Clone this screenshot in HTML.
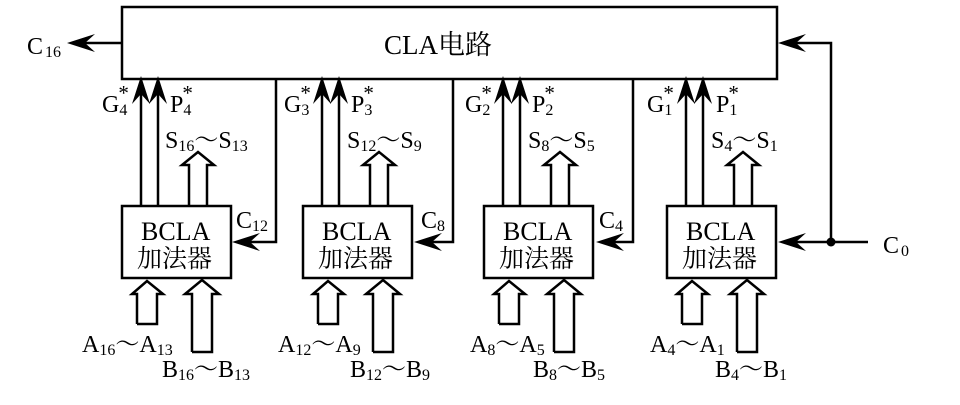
<!DOCTYPE html>
<html><head><meta charset="utf-8"><style>
html,body{margin:0;padding:0;background:#fff;}
svg{display:block;}
text{font-family:"Liberation Serif","Noto Serif CJK SC",serif;fill:#000;}
</style></head><body>
<svg width="960" height="405" viewBox="0 0 960 405" xmlns="http://www.w3.org/2000/svg">
<defs>
<polygon id="au" points="0,0 9,28 0,18 -9,28" fill="#000"/>
<polygon id="al" points="0,0 28,-9 18,0 28,9" fill="#000"/>
<g id="blk" fill="none" stroke="#000" stroke-width="2.5">
  <rect x="0" y="206" width="109" height="72" fill="#fff"/>
  <line x1="19" y1="206" x2="19" y2="92"/>
  <line x1="36" y1="206" x2="36" y2="92"/>
  <polyline points="67,206 67,165 60,165 76,152 92,165 85,165 85,206"/>
  <polyline points="15,324 15,294 10,294 25,281 41,294 35,294 35,324 15,324"/>
  <polyline points="70,352 70,294 63,294 80,280 97,294 90,294 90,352 70,352"/>
</g>
</defs>
<g fill="none" stroke="#000" stroke-width="2.5">
  <rect x="122" y="7" width="655" height="72"/>
  <line x1="122" y1="43" x2="85" y2="43"/>
  <polyline points="276,79 276,242 250,242"/>
  <polyline points="453,79 453,242 432,242"/>
  <polyline points="633,79 633,242 613,242"/>
  <polyline points="868,242 831,242 831,43 795,43"/>
  <line x1="831" y1="242" x2="795" y2="242"/>
</g>
<circle cx="831" cy="242" r="4.5" fill="#000"/>
<use href="#al" x="67" y="43"/>
<use href="#al" x="232" y="242"/>
<use href="#al" x="414" y="242"/>
<use href="#al" x="596" y="242"/>
<use href="#al" x="778" y="242"/>
<use href="#al" x="778" y="43"/>
<use href="#blk" x="122"/>
<use href="#blk" x="303"/>
<use href="#blk" x="484"/>
<use href="#blk" x="667"/>
<g>
<use href="#au" x="141" y="76"/><use href="#au" x="158" y="76"/>
<use href="#au" x="322" y="76"/><use href="#au" x="339" y="76"/>
<use href="#au" x="503" y="76"/><use href="#au" x="520" y="76"/>
<use href="#au" x="686" y="76"/><use href="#au" x="703" y="76"/>
</g>
<g font-size="24">
<text x="384" y="54" font-size="27">CLA电路</text>
<text x="27" y="54">C<tspan font-size="16" dx="2" dy="3">16</tspan></text>
<text x="883" y="253">C<tspan font-size="16" dx="2" dy="3">0</tspan></text>
<text x="141" y="240" font-size="26">BCLA</text><text x="137" y="267" font-size="25">加法器</text>
<text x="322" y="240" font-size="26">BCLA</text><text x="318" y="267" font-size="25">加法器</text>
<text x="503" y="240" font-size="26">BCLA</text><text x="499" y="267" font-size="25">加法器</text>
<text x="686" y="240" font-size="26">BCLA</text><text x="682" y="267" font-size="25">加法器</text>
<text x="236" y="228">C<tspan font-size="16" dy="3">12</tspan></text>
<text x="421" y="228">C<tspan font-size="16" dy="3">8</tspan></text>
<text x="599" y="228">C<tspan font-size="16" dy="3">4</tspan></text>
<text x="102" y="112">G<tspan font-size="16" dy="3">4</tspan><tspan font-size="21" dx="-9" dy="-15">*</tspan></text>
<text x="170" y="112">P<tspan font-size="16" dy="3">4</tspan><tspan font-size="21" dx="-9" dy="-15">*</tspan></text>
<text x="284" y="112">G<tspan font-size="16" dy="3">3</tspan><tspan font-size="21" dx="-9" dy="-15">*</tspan></text>
<text x="351" y="112">P<tspan font-size="16" dy="3">3</tspan><tspan font-size="21" dx="-9" dy="-15">*</tspan></text>
<text x="465" y="112">G<tspan font-size="16" dy="3">2</tspan><tspan font-size="21" dx="-9" dy="-15">*</tspan></text>
<text x="532" y="112">P<tspan font-size="16" dy="3">2</tspan><tspan font-size="21" dx="-9" dy="-15">*</tspan></text>
<text x="647" y="112">G<tspan font-size="16" dy="3">1</tspan><tspan font-size="21" dx="-9" dy="-15">*</tspan></text>
<text x="716" y="112">P<tspan font-size="16" dy="3">1</tspan><tspan font-size="21" dx="-9" dy="-15">*</tspan></text>

<text x="165" y="148">S<tspan font-size="16" dy="3">16</tspan><tspan dy="-3">～S</tspan><tspan font-size="16" dy="3">13</tspan></text>
<text x="347" y="148">S<tspan font-size="16" dy="3">12</tspan><tspan dy="-3">～S</tspan><tspan font-size="16" dy="3">9</tspan></text>
<text x="528" y="148">S<tspan font-size="16" dy="3">8</tspan><tspan dy="-3">～S</tspan><tspan font-size="16" dy="3">5</tspan></text>
<text x="711" y="148">S<tspan font-size="16" dy="3">4</tspan><tspan dy="-3">～S</tspan><tspan font-size="16" dy="3">1</tspan></text>

<text x="82" y="352">A<tspan font-size="16" dy="3">16</tspan><tspan dy="-3">～A</tspan><tspan font-size="16" dy="3">13</tspan></text>
<text x="278" y="352">A<tspan font-size="16" dy="3">12</tspan><tspan dy="-3">～A</tspan><tspan font-size="16" dy="3">9</tspan></text>
<text x="470" y="352">A<tspan font-size="16" dy="3">8</tspan><tspan dy="-3">～A</tspan><tspan font-size="16" dy="3">5</tspan></text>
<text x="650" y="352">A<tspan font-size="16" dy="3">4</tspan><tspan dy="-3">～A</tspan><tspan font-size="16" dy="3">1</tspan></text>

<text x="162" y="377">B<tspan font-size="16" dy="3">16</tspan><tspan dy="-3">～B</tspan><tspan font-size="16" dy="3">13</tspan></text>
<text x="350" y="377">B<tspan font-size="16" dy="3">12</tspan><tspan dy="-3">～B</tspan><tspan font-size="16" dy="3">9</tspan></text>
<text x="533" y="377">B<tspan font-size="16" dy="3">8</tspan><tspan dy="-3">～B</tspan><tspan font-size="16" dy="3">5</tspan></text>
<text x="715" y="377">B<tspan font-size="16" dy="3">4</tspan><tspan dy="-3">～B</tspan><tspan font-size="16" dy="3">1</tspan></text>
</g>
</svg>
</body></html>
